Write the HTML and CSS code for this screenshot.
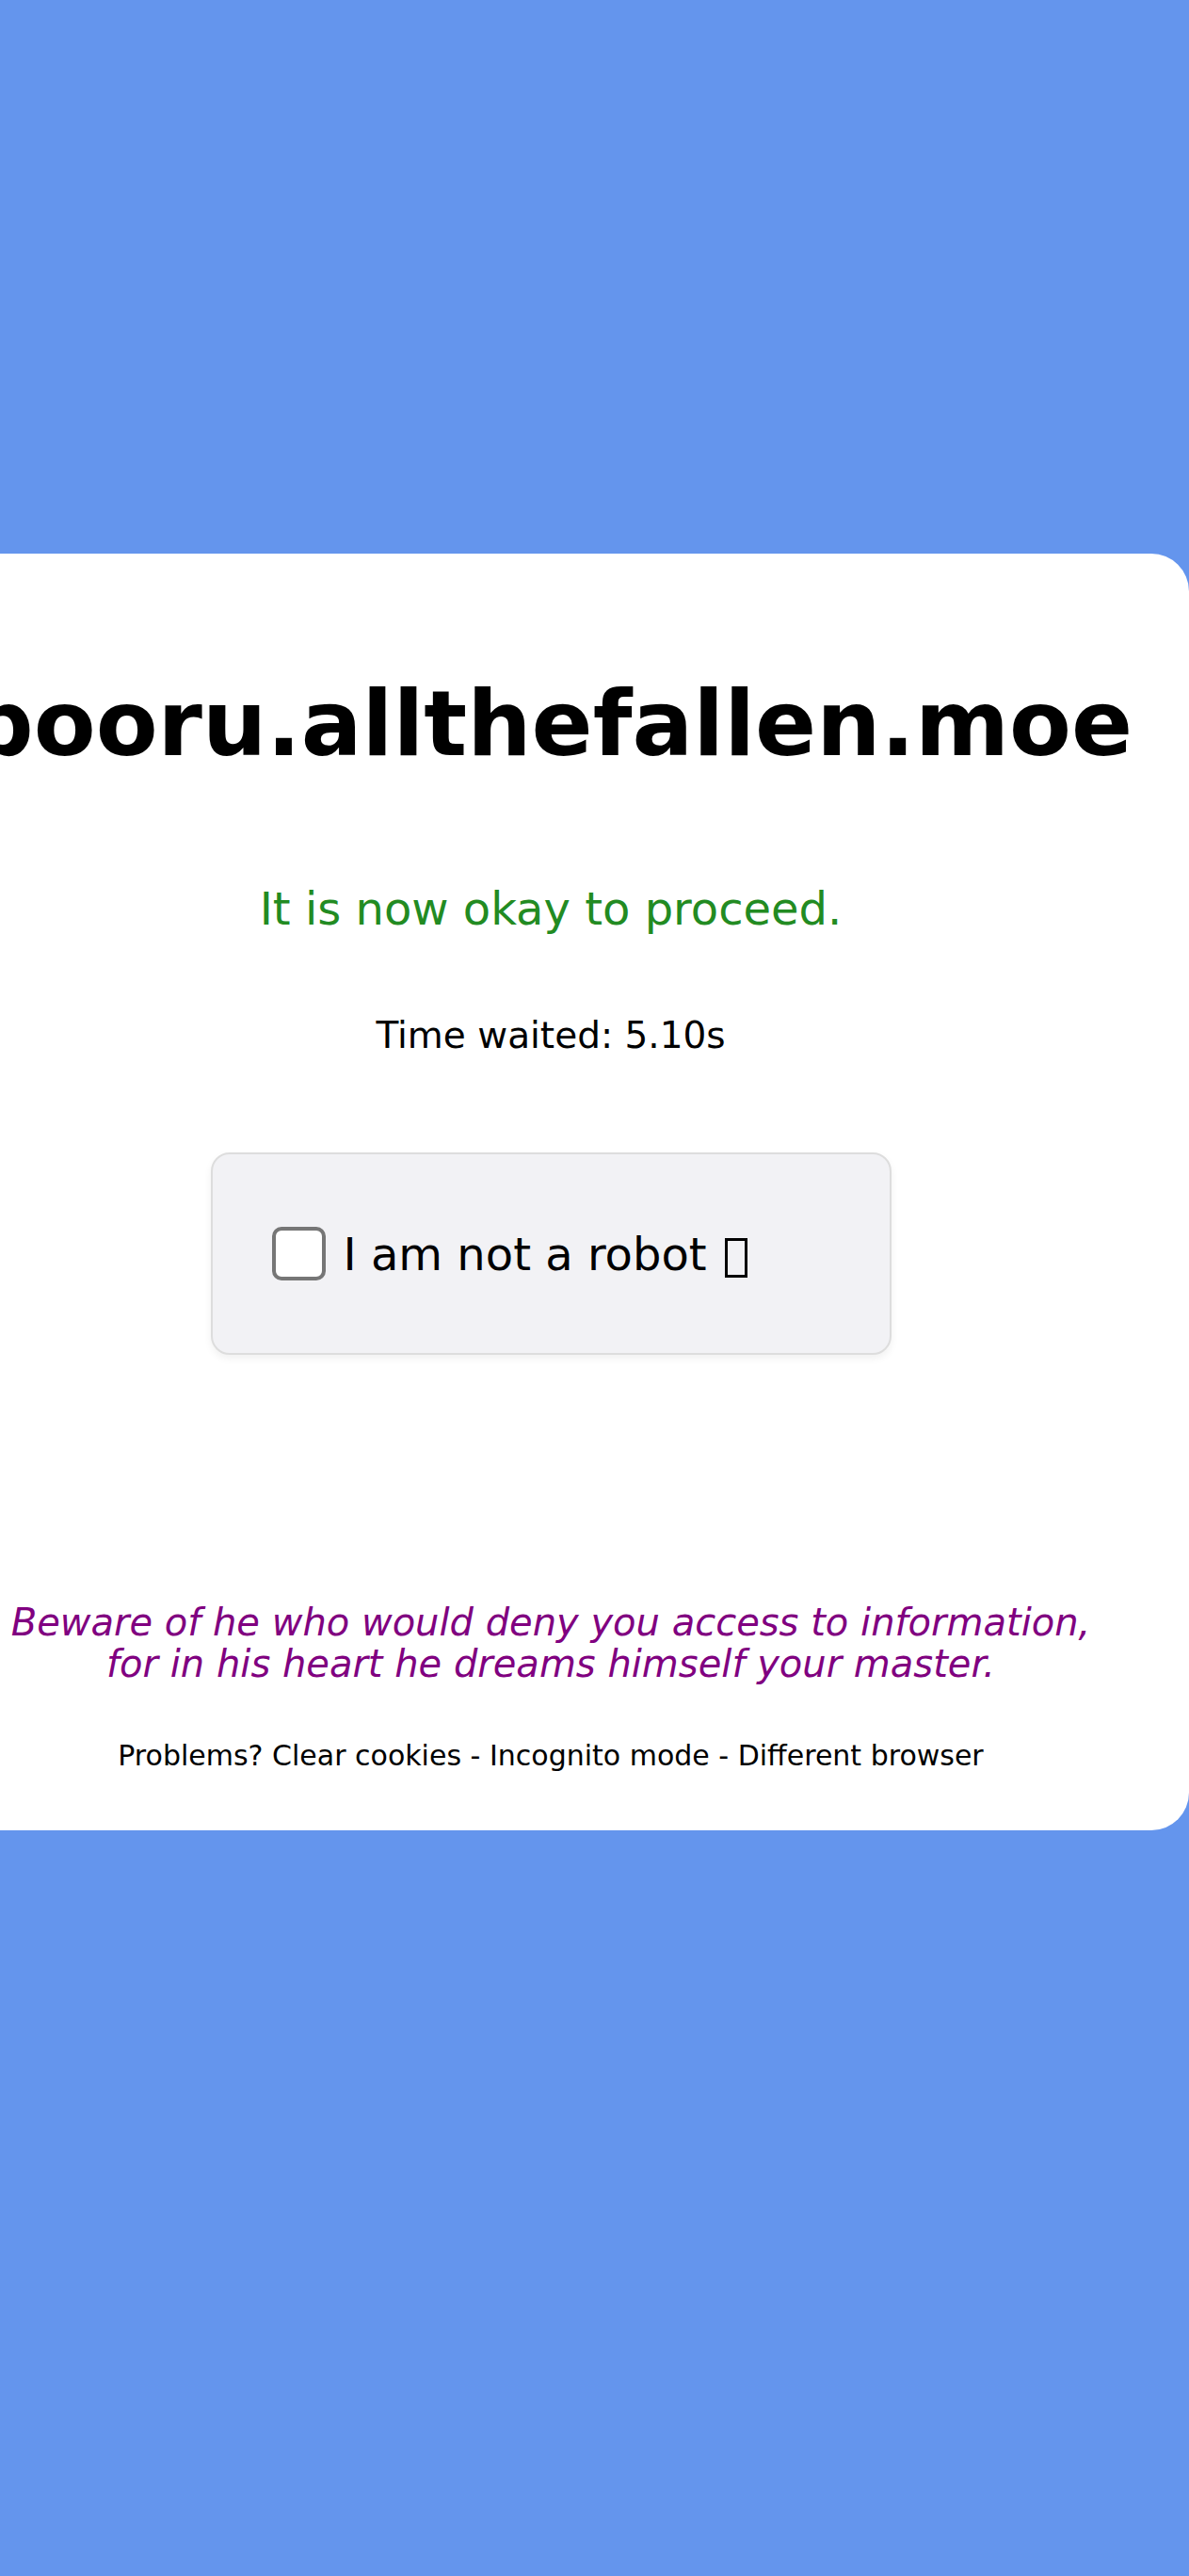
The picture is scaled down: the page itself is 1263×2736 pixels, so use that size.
FILE: index.html
```html
<!DOCTYPE html>
<html lang="en">
<head>
<meta charset="utf-8">
<title>booru.allthefallen.moe</title>
<link rel="stylesheet" href="styles.css">
</head>
<body>
<main class="card">
  <h1 class="site">booru.allthefallen.moe</h1>
  <p class="status">It is now okay to proceed.</p>
  <p class="time">Time waited: 5.10s</p>
  <label class="captcha">
    <span class="check"></span>
    <span class="captcha-text">I am not a robot <span class="tofu" aria-label="robot"></span></span>
  </label>
  <p class="quote">Beware of he who would deny you access to information,<br>for in his heart he dreams himself your master.</p>
  <p class="problems">Problems? Clear cookies - Incognito mode - Different browser</p>
</main>
</body>
</html>
```
FILE: styles.css
```css
html, body {
  margin: 0;
  padding: 0;
}
body {
  background: #6495ed;
  font-family: "DejaVu Sans", sans-serif;
  min-height: 2736px;
  overflow: hidden;
}
.card {
  box-sizing: border-box;
  width: 1356px;
  margin: 588px 0 0 -93px;
  height: 1356px;
  background: #ffffff;
  border-radius: 40px;
  display: flex;
  flex-direction: column;
  align-items: center;
  padding-top: 125px;
}
.site {
  margin: 0;
  font-size: 96px;
  font-weight: bold;
  line-height: normal;
  white-space: nowrap;
  color: #000;
}
.status {
  margin: 112px 0 0;
  font-size: 48px;
  line-height: normal;
  color: #228b22;
}
.time {
  margin: 84px 0 0;
  font-size: 39px;
  line-height: normal;
  color: #000;
}
.captcha {
  box-sizing: border-box;
  width: 723px;
  margin-top: 102px;
  padding: 77px 0 77px 63px;
  background: #f2f2f5;
  border: 2px solid #dddddd;
  border-radius: 20px;
  box-shadow: 0 4px 8px rgba(0, 0, 0, 0.06);
  display: flex;
  align-items: center;
  gap: 19px;
}
.check {
  box-sizing: border-box;
  width: 57px;
  height: 57px;
  border: 4px solid #767676;
  border-radius: 10px;
  background: #ffffff;
  flex: none;
}
.captcha-text {
  font-size: 48px;
  line-height: normal;
  color: #000;
}
.tofu {
  display: inline-block;
  box-sizing: border-box;
  width: 24px;
  height: 42px;
  margin-left: 4px;
  border: 3px solid #000;
  vertical-align: -8px;
}
.quote {
  margin: 262px 0 0;
  font-size: 40px;
  font-style: italic;
  line-height: 44px;
  text-align: center;
  color: #800080;
}
.problems {
  margin: 58px 0 0;
  font-size: 30px;
  line-height: normal;
  color: #000;
}
```
